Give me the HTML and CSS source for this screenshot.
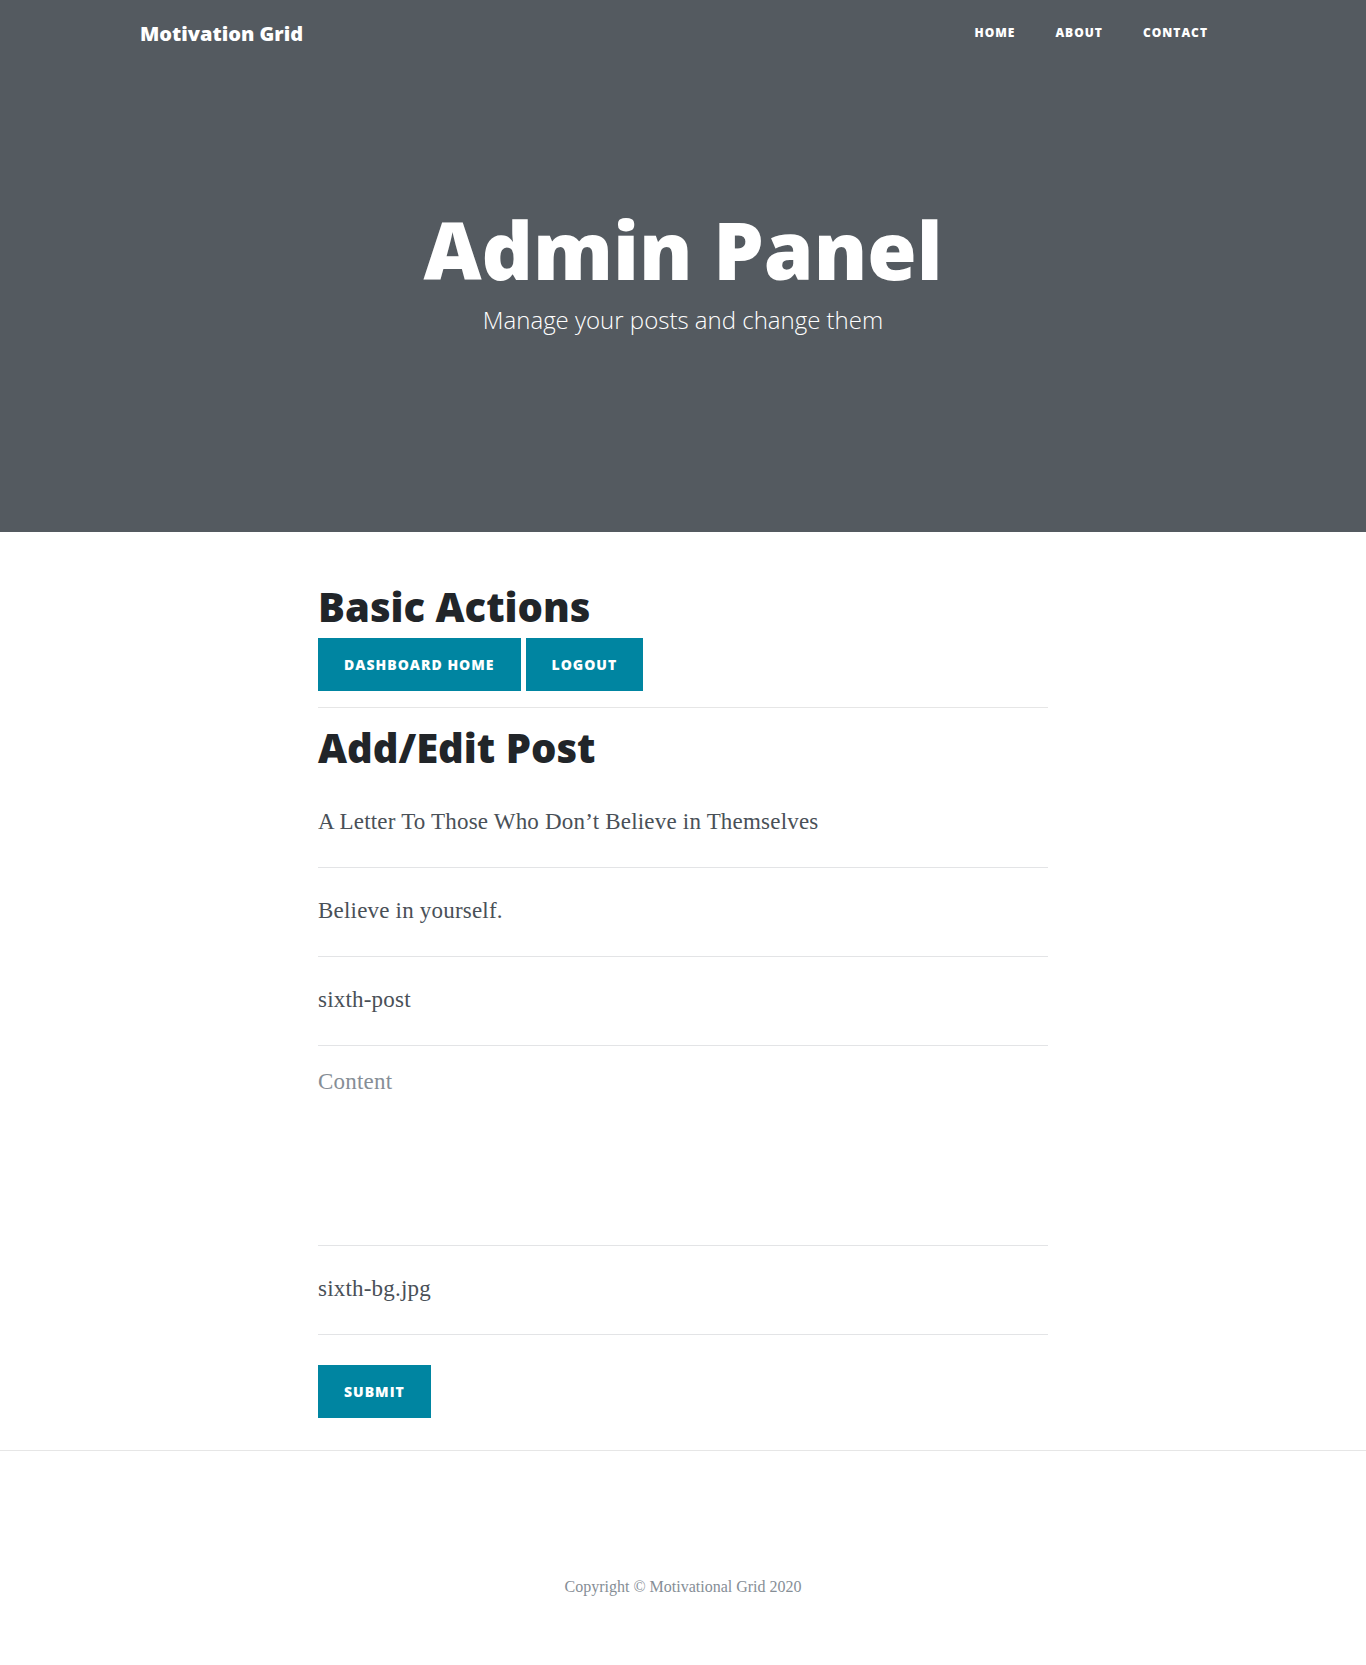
FILE: index.html
```html
<!DOCTYPE html>
<html lang="en">
<head>
<meta charset="utf-8">
<title>Admin Panel - Motivation Grid</title>
<link rel="stylesheet" href="styles.css">
</head>
<body>
<header class="masthead">
  <nav class="navbar">
    <div class="nav-inner">
      <a class="brand" href="#">Motivation Grid</a>
      <ul class="nav-links">
        <li><a href="#">Home</a></li>
        <li><a href="#">About</a></li>
        <li><a href="#">Contact</a></li>
      </ul>
    </div>
  </nav>
  <div class="site-heading">
    <h1>Admin Panel</h1>
    <span class="subheading">Manage your posts and change them</span>
  </div>
</header>

<main class="container">
  <h2 class="section-title">Basic Actions</h2>
  <div class="actions">
    <a class="btn" href="#">Dashboard Home</a>
    <a class="btn" href="#">Logout</a>
  </div>
  <hr class="divider">
  <h2 class="section-title">Add/Edit Post</h2>
  <form class="post-form">
    <div class="field"><input type="text" value="A Letter To Those Who Don’t Believe in Themselves"></div>
    <div class="field"><input type="text" value="Believe in yourself."></div>
    <div class="field"><input type="text" value="sixth-post"></div>
    <div class="field field-area"><textarea placeholder="Content"></textarea></div>
    <div class="field"><input type="text" value="sixth-bg.jpg"></div>
    <button type="button" class="btn submit">Submit</button>
  </form>
</main>

<hr class="footer-rule">
<footer class="footer">
  <p class="copyright">Copyright © Motivational Grid 2020</p>
</footer>
</body>
</html>
```

FILE: styles.css
```css
* {
  box-sizing: border-box;
}

body {
  margin: 0;
  font-family: "Liberation Serif", "Times New Roman", serif;
  font-size: 20px;
  color: #212529;
  background: #fff;
}

a {
  text-decoration: none;
}

/* ---------- header ---------- */
.masthead {
  background-color: #545a60;
  color: #fff;
  margin-bottom: 51px;
}

.navbar {
  height: 65px;
  padding-top: 1px;
  display: flex;
  align-items: center;
}

.nav-inner {
  width: 1086px;
  margin: 0 auto;
  display: flex;
  align-items: center;
  justify-content: space-between;
}

.brand {
  font-family: "Open Sans", sans-serif;
  font-weight: 800;
  font-size: 20px;
  line-height: 30px;
  color: #fff;
  position: relative;
  top: 1px;
}

.nav-links {
  list-style: none;
  margin: 0;
  padding: 0;
  display: flex;
}

.nav-links a {
  display: block;
  padding: 10px 20px;
  font-family: "Open Sans", sans-serif;
  font-weight: 800;
  font-size: 12px;
  line-height: 18px;
  letter-spacing: 1px;
  text-transform: uppercase;
  color: #fff;
}

.nav-links li:last-child a {
  padding-right: 18px;
}

.site-heading {
  text-align: center;
  padding: 140px 0 199px;
}

.site-heading h1 {
  margin: 0;
  font-family: "Open Sans", sans-serif;
  font-weight: 800;
  font-size: 80px;
  line-height: 88px;
}

.subheading {
  display: block;
  margin-top: 14px;
  font-family: "Open Sans", sans-serif;
  font-weight: 300;
  font-size: 24px;
  line-height: 26.4px;
}

/* ---------- main ---------- */
.container {
  width: 730px;
  margin: 0 auto;
}

.section-title {
  margin: 0 0 7px;
  font-family: "Open Sans", sans-serif;
  font-weight: 800;
  font-size: 40px;
  line-height: 48px;
  color: #212529;
}

.actions {
  display: flex;
  gap: 5px;
}

.btn {
  display: inline-block;
  padding: 15px 25px;
  border: 1px solid #0085a1;
  background-color: #0085a1;
  color: #fff;
  font-family: "Open Sans", sans-serif;
  font-weight: 800;
  font-size: 14px;
  line-height: 21px;
  letter-spacing: 1px;
  text-transform: uppercase;
  border-radius: 0;
  cursor: pointer;
}

.divider {
  margin: 16px 0 16px;
  border: 0;
  border-top: 1px solid #e6e6e6;
}

.section-title + .post-form {
  margin-top: 4px;
}

.field {
  border-bottom: 1px solid #e3e4e6;
  padding: 26px 0 28px;
}

.field input,
.field textarea {
  display: block;
  width: 100%;
  border: none;
  padding: 0;
  margin: 0;
  background: none;
  outline: none;
  font-family: "Liberation Serif", "Times New Roman", serif;
  font-size: 23px;
  letter-spacing: 0.2px;
  color: #495057;
}

.field input {
  height: 34px;
  line-height: 34px;
}

.field-area {
  padding: 19px 0 29px;
}

.field textarea {
  height: 151px;
  line-height: 34.5px;
  resize: none;
}

.field textarea::placeholder {
  color: #868e96;
  opacity: 1;
}

.submit {
  margin-top: 30px;
}

/* ---------- footer ---------- */
.footer-rule {
  margin: 32px 0 0;
  border: 0;
  border-top: 1px solid #e6e6e6;
}

.footer {
  padding: 125px 0 65px;
}

.copyright {
  margin: 0;
  text-align: center;
  font-family: "Liberation Serif", "Times New Roman", serif;
  font-size: 16px;
  line-height: 22.5px;
  color: #868e96;
}
```
